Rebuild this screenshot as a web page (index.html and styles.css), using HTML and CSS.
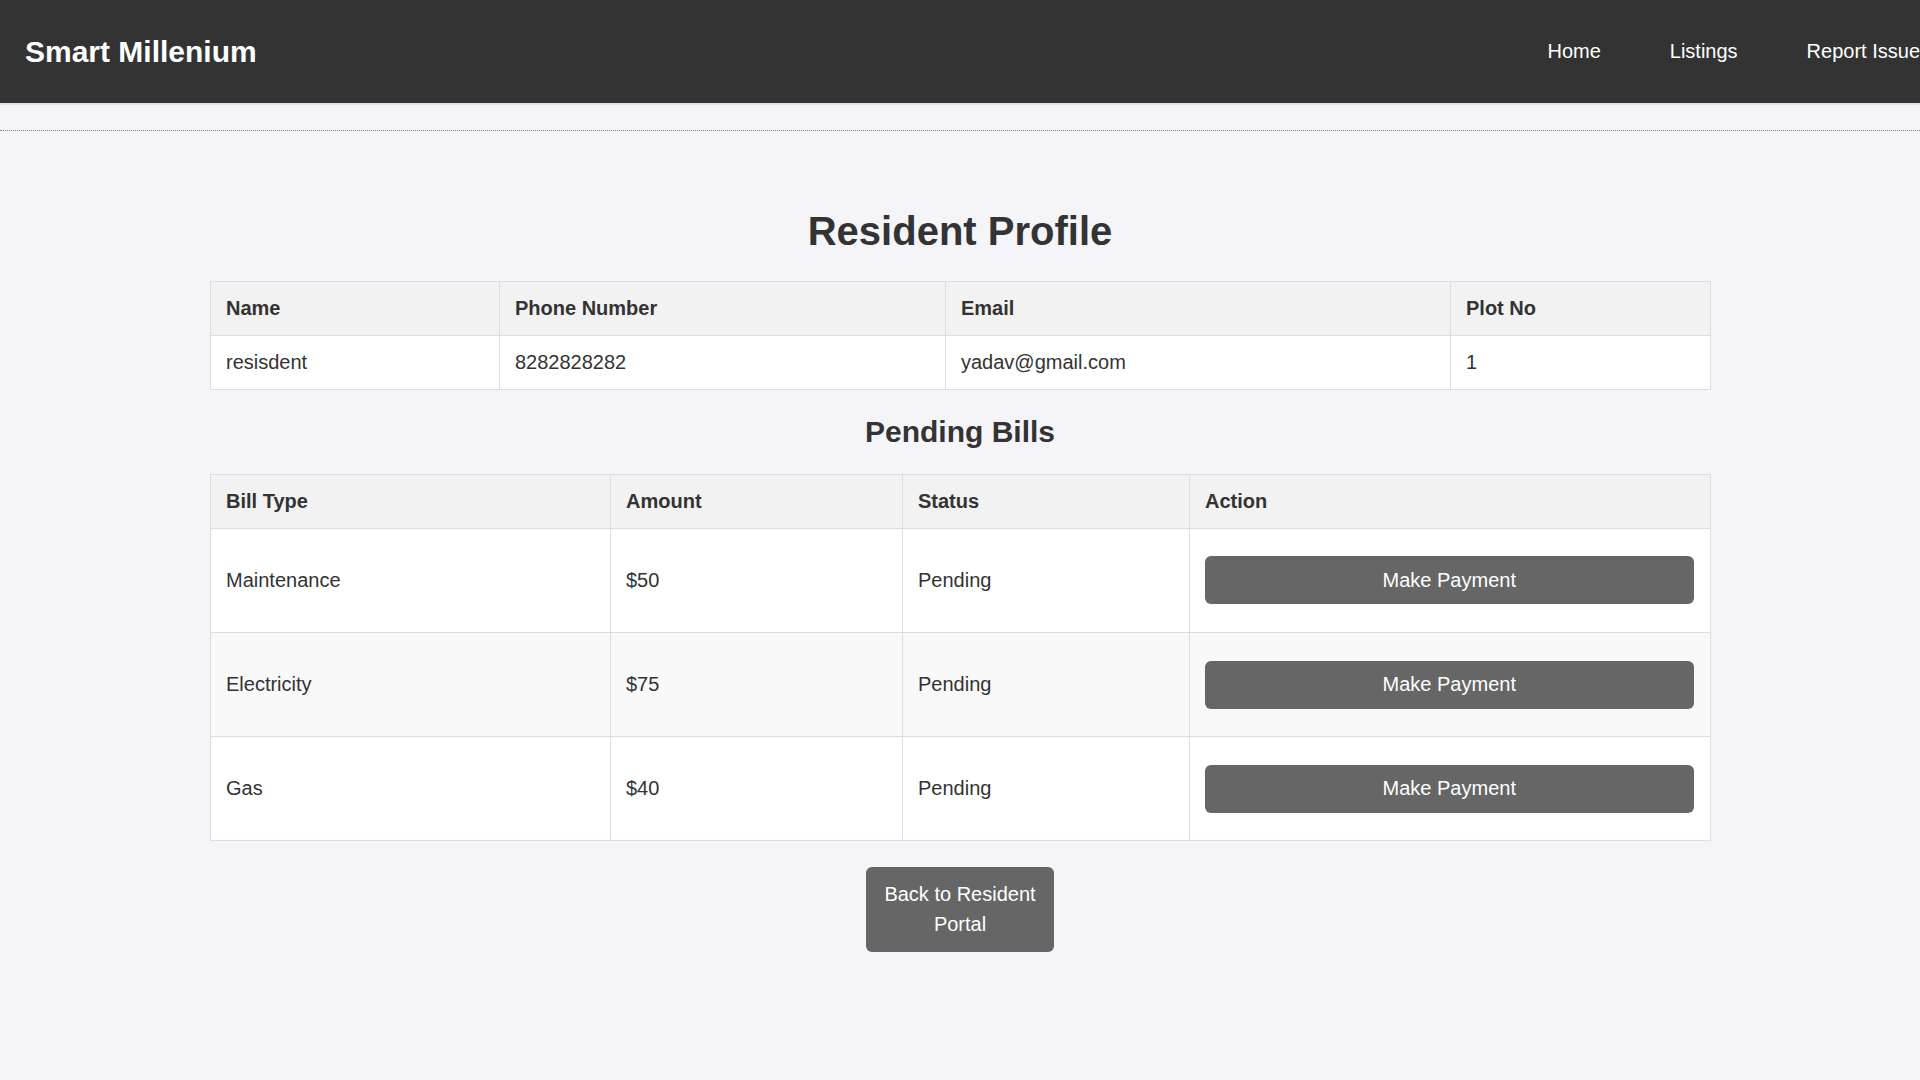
FILE: index.html
```html
<!DOCTYPE html>
<html lang="en">
<head>
<meta charset="utf-8">
<title>Resident Profile - Smart Millenium</title>
<link rel="stylesheet" href="styles.css">
</head>
<body>
<header class="site-header">
  <div class="logo">Smart Millenium</div>
  <nav class="nav">
    <a href="#" class="nav-link">Home</a>
    <a href="#" class="nav-link">Listings</a>
    <a href="#" class="nav-link">Report Issue</a>
  </nav>
</header>
<div class="divider"></div>
<main class="container">
  <h1 class="page-title">Resident Profile</h1>
  <table class="data-table">
    <colgroup>
      <col class="c-name"><col class="c-phone"><col class="c-email"><col class="c-plot">
    </colgroup>
    <thead>
      <tr><th>Name</th><th>Phone Number</th><th>Email</th><th>Plot No</th></tr>
    </thead>
    <tbody>
      <tr><td>resisdent</td><td>8282828282</td><td>yadav@gmail.com</td><td>1</td></tr>
    </tbody>
  </table>

  <h2 class="section-title">Pending Bills</h2>
  <table class="data-table bills">
    <colgroup>
      <col class="c-type"><col class="c-amount"><col class="c-status"><col class="c-action">
    </colgroup>
    <thead>
      <tr><th>Bill Type</th><th>Amount</th><th>Status</th><th>Action</th></tr>
    </thead>
    <tbody>
      <tr><td>Maintenance</td><td>$50</td><td>Pending</td><td><button class="pay-btn">Make Payment</button></td></tr>
      <tr><td>Electricity</td><td>$75</td><td>Pending</td><td><button class="pay-btn">Make Payment</button></td></tr>
      <tr><td>Gas</td><td>$40</td><td>Pending</td><td><button class="pay-btn">Make Payment</button></td></tr>
    </tbody>
  </table>

  <div class="back-wrap">
    <a href="#" class="back-btn">Back to Resident Portal</a>
  </div>
</main>
</body>
</html>
```
FILE: styles.css
```css
* { box-sizing: border-box; }

html, body {
  margin: 0;
  padding: 0;
}

body {
  background: #f4f4f9;
  color: #333;
  font-family: "Liberation Sans", Arial, sans-serif;
  font-size: 20px;
  overflow-x: hidden;
}

.site-header {
  height: 105px;
  background: #333;
  border-bottom: 2px solid #e0e0e0;
  display: flex;
  align-items: center;
  justify-content: space-between;
  padding-left: 25px;
  color: #fff;
}

.logo {
  font-size: 30px;
  font-weight: bold;
  color: #fff;
}

.nav {
  display: flex;
  gap: 69px;
  margin-right: 0;
}

.nav-link {
  color: #fff;
  text-decoration: none;
  font-size: 20px;
  white-space: nowrap;
}

.divider {
  margin-top: 25px;
  border-top: 1px dotted #808080;
}

.container {
  width: 1500px;
  margin: 0 auto;
  padding-top: 51.5px;
}

.page-title {
  font-size: 40px;
  font-weight: bold;
  text-align: center;
  margin: 26.8px 0;
  color: #333;
}

.section-title {
  font-size: 30px;
  font-weight: bold;
  text-align: center;
  margin: 24.9px 0;
  color: #333;
}

.data-table {
  width: 100%;
  border-collapse: collapse;
  table-layout: fixed;
  background: #fff;
}

.data-table th,
.data-table td {
  border: 1px solid #ddd;
  padding: 15px;
  text-align: left;
  vertical-align: middle;
  font-size: 20px;
  color: #333;
}

.data-table th {
  background: #f2f2f2;
  font-weight: bold;
}

.data-table tbody tr:nth-child(even) td {
  background: #f9f9f9;
}

.c-name { width: 289px; }
.c-phone { width: 446px; }
.c-email { width: 505px; }
.c-plot { width: 260px; }

.c-type { width: 400px; }
.c-amount { width: 292px; }
.c-status { width: 287px; }
.c-action { width: 521px; }

.pay-btn {
  display: block;
  width: calc(100% - 1.5px);
  margin: 12.55px 0;
  padding: 12.5px;
  border: none;
  border-radius: 6px;
  background: #666;
  color: #fff;
  font-family: "Liberation Sans", Arial, sans-serif;
  font-size: 20px;
  line-height: 23px;
  cursor: pointer;
}

.back-wrap {
  display: flex;
  justify-content: center;
  margin-top: 25.5px;
}

.back-btn {
  display: block;
  width: 188px;
  padding: 12.5px 18px;
  background: #666;
  color: #fff;
  text-decoration: none;
  text-align: center;
  font-size: 20px;
  line-height: 30px;
  border-radius: 6px;
}
```
